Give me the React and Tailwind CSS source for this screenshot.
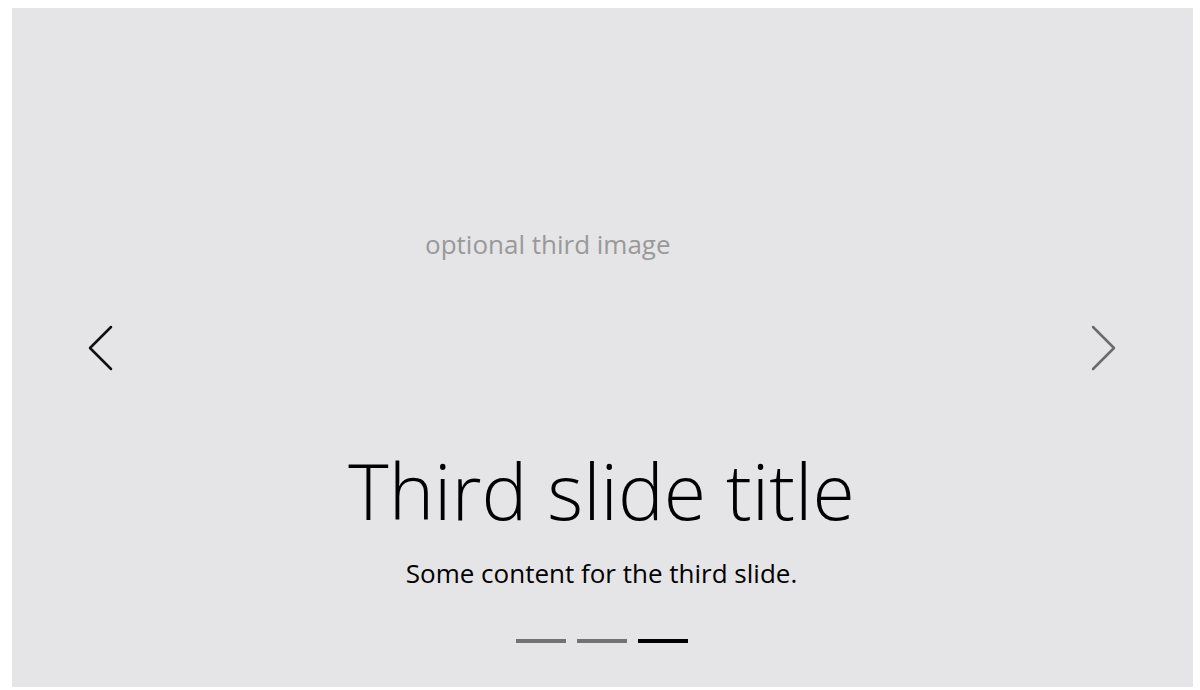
function Chevron({ dir, className }) {
  return (
    <svg width="26" height="46" viewBox="0 0 26 46" fill="none" className={className}>
      {dir === "left" ? (
        <path d="M24 2 L3 23 L24 44" stroke="currentColor" strokeWidth="2.5" strokeLinecap="round" strokeLinejoin="round" />
      ) : (
        <path d="M2 2 L23 23 L2 44" stroke="currentColor" strokeWidth="2.5" strokeLinecap="round" strokeLinejoin="round" />
      )}
    </svg>
  );
}

export default function App() {
  const slides = [false, false, true];
  return (
    <div className="h-[690px] w-[1200px] bg-white pt-[8px] pl-[12px] font-['Open_Sans',sans-serif]">
      <div className="relative flex h-[679px] w-[1181px] flex-col bg-[#e5e4e7]">
        {/* image placeholder */}
        <div className="pt-[220px] pl-[413px] text-[26px] leading-[32px] text-[#999999]">
          optional third image
        </div>

        {/* prev / next */}
        <button className="absolute left-[63px] top-[309px] flex h-[62px] w-[50px] items-center justify-center text-[#111111]">
          <Chevron dir="left" />
        </button>
        <button className="absolute left-[1067px] top-[309px] flex h-[62px] w-[50px] items-center justify-center text-[#6b6b6b]">
          <Chevron dir="right" />
        </button>

        {/* caption */}
        <div className="mt-auto flex flex-col items-center pb-[44px] pr-[2px]">
          <h2 className="text-[77px] font-light leading-[90px] text-black">Third slide title</h2>
          <p className="mt-[21px] text-[26px] leading-[32px] text-black">Some content for the third slide.</p>
          <div className="mt-[50px] flex gap-[11px]">
            {slides.map((active, i) => (
              <span
                key={i}
                className={active ? "h-[4px] w-[50px] bg-black" : "h-[4px] w-[50px] bg-[#737373]"}
              />
            ))}
          </div>
        </div>
      </div>
    </div>
  );
}
